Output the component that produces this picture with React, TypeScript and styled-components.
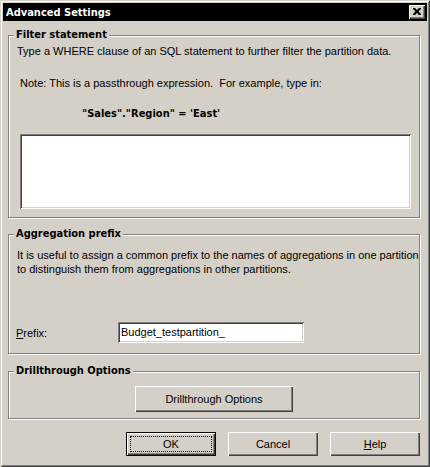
import React from "react";
import styled, { createGlobalStyle } from "styled-components";

const Global = createGlobalStyle`
  html, body { margin: 0; padding: 0; background: #d4d0c8; }
  * { box-sizing: border-box; }
`;

const FACE = "#d4d0c8";
const SHADOW = "#808080";
const DARK = "#404040";

const Window = styled.div`
  width: 430px;
  height: 467px;
  padding: 3px;
  background: ${FACE};
  box-shadow: inset 1px 1px 0 ${FACE}, inset -1px -1px 0 ${DARK},
    inset 2px 2px 0 #fff, inset -2px -2px 0 ${SHADOW};
  display: flex;
  flex-direction: column;
  font-family: "Liberation Sans", Arial, sans-serif;
  font-size: 11px;
  color: #000;
  overflow: hidden;
`;

const TitleBar = styled.div`
  flex: 0 0 18px;
  height: 18px;
  background: #000;
  display: flex;
  align-items: center;
  justify-content: space-between;
  padding: 0 2px 0 3px;
`;

const TitleText = styled.span`
  color: #fff;
  font-family: "DejaVu Sans Condensed", "DejaVu Sans", sans-serif;
  font-weight: bold;
  font-size: 11px;
`;

const CloseButton = styled.div`
  width: 16px;
  height: 14px;
  background: ${FACE};
  box-shadow: inset 1px 1px 0 #fff, inset -1px -1px 0 ${DARK},
    inset -2px -2px 0 ${SHADOW};
  display: flex;
  align-items: center;
  justify-content: center;
  padding: 0 1px 1px 0;
`;

const Content = styled.div`
  flex: 0 0 auto;
  display: flex;
  flex-direction: column;
  padding: 0 7px 0 5px;
`;

const Group = styled.div<{ $mt: number; $pt: number; $pb: number }>`
  position: relative;
  flex: 0 0 auto;
  margin-top: ${(p) => p.$mt}px;
  border: 1px solid ${SHADOW};
  box-shadow: inset 1px 1px 0 #fff, 1px 1px 0 #fff;
  padding: ${(p) => p.$pt}px 8px ${(p) => p.$pb}px 8px;
  display: flex;
  flex-direction: column;
`;

const GroupLabel = styled.span`
  position: absolute;
  top: -8px;
  left: 5px;
  padding: 0 2px;
  background: ${FACE};
  font-family: "DejaVu Sans Condensed", "DejaVu Sans", sans-serif;
  font-weight: bold;
  font-size: 11px;
  line-height: 14px;
`;

const Text = styled.div<{ $mt?: number }>`
  line-height: 13px;
  margin-top: ${(p) => p.$mt ?? 0}px;
  white-space: nowrap;
`;

const Para = styled.div`
  line-height: 14px;
  white-space: nowrap;
`;

const Example = styled.div`
  margin: 17px 0 0 65px;
  font-family: "DejaVu Sans Condensed", "DejaVu Sans", sans-serif;
  font-weight: bold;
  font-size: 11px;
  line-height: 13px;
`;

const Sunken = styled.div`
  background: #fff;
  box-shadow: inset 1px 1px 0 ${SHADOW}, inset -1px -1px 0 #fff,
    inset 2px 2px 0 ${DARK}, inset -2px -2px 0 ${FACE};
`;

const TextArea = styled(Sunken)`
  margin: 14px 0 0 3px;
  height: 75px;
  flex: 0 0 75px;
`;

const FieldRow = styled.div`
  display: flex;
  align-items: center;
  margin-top: 46px;
`;

const FieldLabel = styled.span`
  width: 102px;
  margin-left: -1px;
`;

const Input = styled(Sunken)`
  width: 186px;
  height: 21px;
  padding: 4px 3px;
  line-height: 13px;
  font-size: 11px;
`;

const Button = styled.div<{ $w: number; $h: number; $default?: boolean }>`
  width: ${(p) => p.$w}px;
  height: ${(p) => p.$h}px;
  background: ${FACE};
  display: flex;
  align-items: center;
  justify-content: center;
  position: relative;
  box-shadow: ${(p) =>
    p.$default
      ? `inset 0 0 0 1px #000, inset 2px 2px 0 #fff, inset -2px -2px 0 ${DARK}, inset -3px -3px 0 ${SHADOW}`
      : `inset 1px 1px 0 #fff, inset -1px -1px 0 ${DARK}, inset -2px -2px 0 ${SHADOW}`};
`;

const Focus = styled.span`
  position: absolute;
  inset: 4px;
  border: 1px dotted #000;
`;

const Centered = styled.div`
  display: flex;
  justify-content: center;
`;

const ButtonRow = styled.div`
  display: flex;
  justify-content: flex-end;
  gap: 12px;
  margin-top: 13px;
`;

const U = styled.span`
  text-decoration: underline;
`;

export default function App() {
  return (
    <>
      <Global />
      <Window>
        <TitleBar>
          <TitleText>Advanced Settings</TitleText>
          <CloseButton>
            <svg width="8" height="7" viewBox="0 0 8 7">
              <path
                d="M0 0h2l2 2 2-2h2v1l-2.5 2.5L8 6v1H6L4 5 2 7H0V6l2.5-2.5L0 1z"
                fill="#000"
              />
            </svg>
          </CloseButton>
        </TitleBar>
        <Content>
          <Group $mt={14} $pt={9} $pb={8}>
            <GroupLabel>Filter statement</GroupLabel>
            <Text>Type a WHERE clause of an SQL statement to further filter the partition data.</Text>
            <Text $mt={19}>&nbsp;Note: This is a passthrough expression.&nbsp; For example, type in:</Text>
            <Example>"Sales"."Region" = 'East'</Example>
            <TextArea />
          </Group>
          <Group $mt={16} $pt={13} $pb={10}>
            <GroupLabel>Aggregation prefix</GroupLabel>
            <Para>
              It is useful to assign a common prefix to the names of aggregations in one partition
              <br />
              to distinguish them from aggregations in other partitions.
            </Para>
            <FieldRow>
              <FieldLabel>
                <U>P</U>refix:
              </FieldLabel>
              <Input>Budget_testpartition_</Input>
            </FieldRow>
          </Group>
          <Group $mt={17} $pt={14} $pb={6}>
            <GroupLabel>Drillthrough Options</GroupLabel>
            <Centered>
              <Button $w={158} $h={26}>Drillthrough Options</Button>
            </Centered>
          </Group>
          <ButtonRow>
            <Button $w={90} $h={24} $default>
              OK
              <Focus />
            </Button>
            <Button $w={90} $h={24}>Cancel</Button>
            <Button $w={90} $h={24}>
              <U>H</U>elp
            </Button>
          </ButtonRow>
        </Content>
      </Window>
    </>
  );
}
